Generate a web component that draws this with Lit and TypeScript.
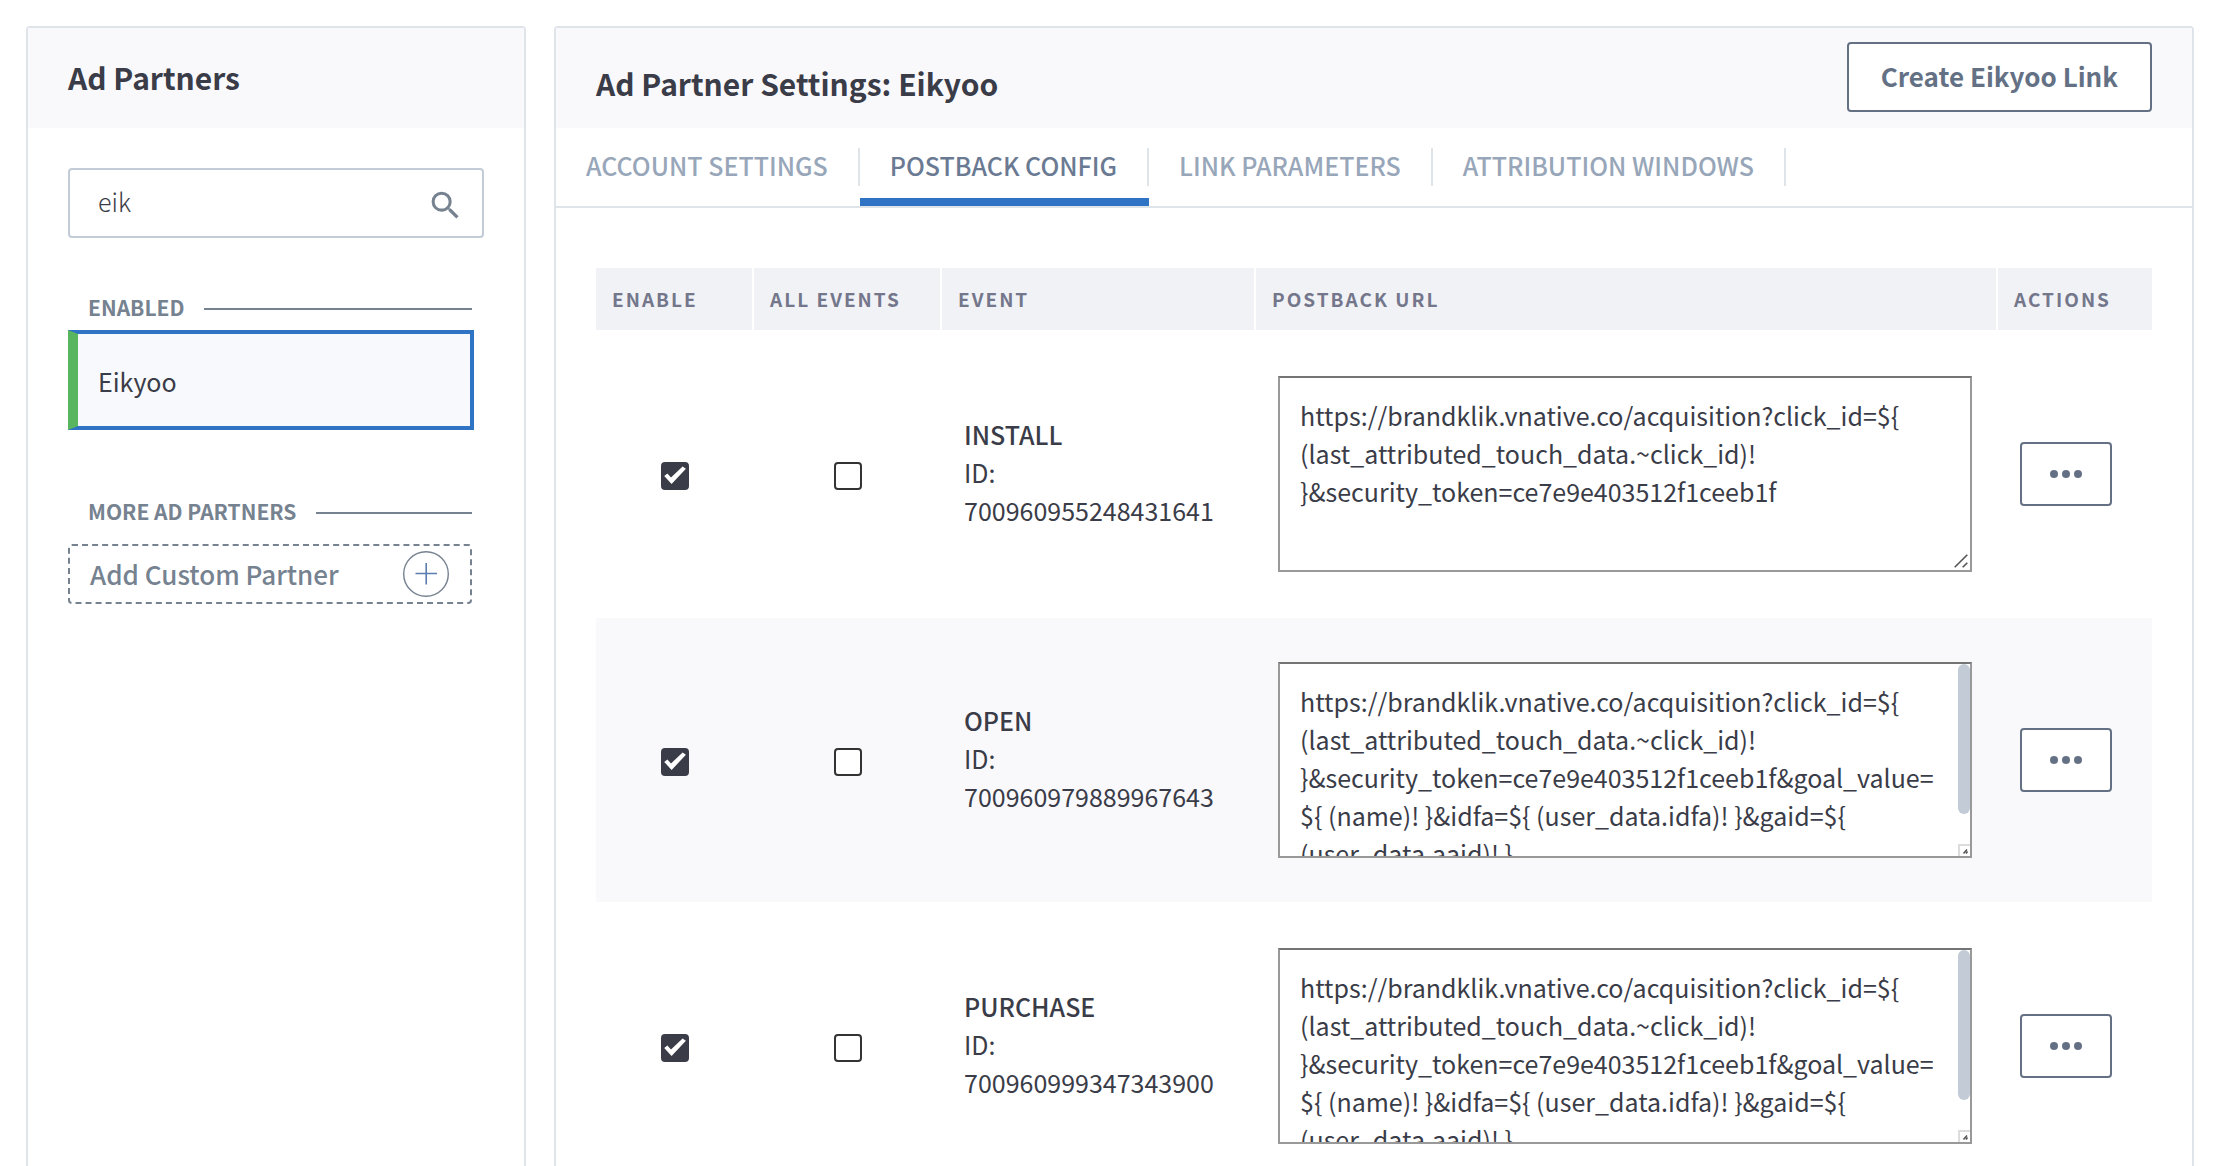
import { LitElement, html, css, svg, nothing } from "lit";
import { customElement, property, state } from "lit/decorators.js";

interface PostbackRow {
  name: string;
  id: string;
  url: string;
  enabled: boolean;
  allEvents: boolean;
  overflowing: boolean;
}

const BASE_URL =
  "https://brandklik.vnative.co/acquisition?click_id=${ (last_attributed_touch_data.~click_id)! }&security_token=ce7e9e403512f1ceeb1f";
const VALUE_URL =
  BASE_URL + "&goal_value=${ (name)! }&idfa=${ (user_data.idfa)! }&gaid=${ (user_data.aaid)! }";

const ROWS: PostbackRow[] = [
  { name: "INSTALL", id: "700960955248431641", url: BASE_URL, enabled: true, allEvents: false, overflowing: false },
  { name: "OPEN", id: "700960979889967643", url: VALUE_URL, enabled: true, allEvents: false, overflowing: true },
  { name: "PURCHASE", id: "700960999347343900", url: VALUE_URL, enabled: true, allEvents: false, overflowing: true },
];

const TABS = ["ACCOUNT SETTINGS", "POSTBACK CONFIG", "LINK PARAMETERS", "ATTRIBUTION WINDOWS"];

@customElement("check-box")
export class CheckBox extends LitElement {
  @property({ type: Boolean }) checked = false;
  @property() label = "";

  static styles = css`
    :host {
      display: grid;
      width: 28px;
      margin: 0 auto;
    }
    .box,
    .mark {
      grid-area: 1 / 1;
      width: 28px;
      height: 28px;
    }
    .box {
      appearance: none;
      box-sizing: border-box;
      margin: 0;
      border: 2px solid #333;
      border-radius: 4px;
      background: #fff;
    }
    .box:checked {
      border-color: #3a3c48;
      background: #3a3c48;
    }
    .mark {
      pointer-events: none;
      fill: #fff;
    }
  `;

  render() {
    return html`
      <input
        class="box"
        type="checkbox"
        aria-label=${this.label}
        .checked=${this.checked}
        @change=${(e: Event) => (this.checked = (e.target as HTMLInputElement).checked)}
      />
      ${this.checked
        ? html`<svg class="mark" viewBox="0 0 28 28" aria-hidden="true">
            <path d="M3.2 13.9 6.4 11.5 10 15.6 21.6 4.6 24.9 6.8 10.6 22Z" />
          </svg>`
        : nothing}
    `;
  }
}

@customElement("url-field")
export class UrlField extends LitElement {
  @property() value = "";
  @property() label = "";
  @property({ type: Boolean }) overflowing = false;

  static styles = css`
    :host {
      display: block;
      position: relative;
    }
    .text {
      display: block;
      box-sizing: border-box;
      width: 100%;
      height: 196px;
      margin: 0;
      padding: 18px 20px;
      border: 2px solid #999;
      border-top-color: #747474;
      border-radius: 0;
      background: #fff;
      color: #3a3c48;
      font-family: "Noto Sans CJK SC", "Noto Sans", sans-serif;
      font-size: 25px;
      line-height: 38px;
      resize: none;
      outline: none;
      scrollbar-width: none;
    }
    .scrolling {
      padding-right: 32px;
    }
    .thumb {
      position: absolute;
      top: 2px;
      right: 2px;
      width: 12px;
      height: 150px;
      border-radius: 6px;
      background: #c3ccd6;
      pointer-events: none;
    }
    .grip {
      position: absolute;
      right: 4px;
      bottom: 4px;
      width: 14px;
      height: 14px;
      pointer-events: none;
      fill: none;
      stroke: #555;
    }
    .corner {
      right: 2px;
      bottom: 2px;
      width: 12px;
      height: 12px;
      background: #fff;
    }
  `;

  render() {
    return html`
      <textarea
        class="text ${this.overflowing ? "scrolling" : ""}"
        aria-label=${this.label}
        .value=${this.value}
      ></textarea>
      ${this.overflowing
        ? html`<span class="thumb"></span>
            <svg class="grip corner" viewBox="0 0 12 12" aria-hidden="true">
              <path d="M1 12V1H12" stroke="#dcdcdc" stroke-width="2" />
              <path d="M5.5 9.5 9 5.5M8 9.5 9.5 7.5" stroke-width="1.5" />
            </svg>`
        : html`<svg class="grip" viewBox="0 0 14 14" aria-hidden="true">
            <path d="M0.7 13.3 13.3 0.7M8.7 13.3 13.3 8.7" stroke-width="1.6" />
          </svg>`}
    `;
  }
}

@customElement("partner-list")
export class PartnerList extends LitElement {
  @state() private query = "eik";

  static styles = css`
    :host {
      display: block;
      box-sizing: border-box;
      flex: 0 0 500px;
      border: 2px solid #dfe4e9;
      border-radius: 4px;
      background: #fff;
    }
    .head {
      display: flex;
      align-items: center;
      box-sizing: border-box;
      height: 100px;
      padding: 0 40px 2px;
      background: #f9f9fc;
    }
    .title {
      margin: 0;
      color: #3a3c48;
      font-size: 30px;
      line-height: 40px;
      font-weight: 700;
    }
    .body {
      padding: 40px;
    }
    .search {
      display: flex;
      align-items: center;
      box-sizing: border-box;
      height: 70px;
      padding-right: 18px;
      border: 2px solid #c3ccd6;
      border-radius: 4px;
    }
    .query {
      flex: 1;
      min-width: 0;
      padding: 0 0 4px 28px;
      border: 0;
      outline: none;
      background: none;
      color: #3a3c48;
      font: inherit;
      font-weight: 200;
      font-size: 25px;
      line-height: 38px;
    }
    .glass {
      width: 37px;
      height: 37px;
      margin-top: 4px;
      fill: #768290;
    }
    .group {
      margin: 54px 12px 0 0;
    }
    .group + .group {
      margin-top: 66px;
    }
    .caption {
      display: flex;
      align-items: center;
      gap: 20px;
      margin: 0 0 8px;
      padding-left: 20px;
      color: #768290;
      font-size: 21px;
      line-height: 30px;
      font-weight: 700;
    }
    .caption::after {
      content: "";
      flex: 1;
      height: 2px;
      margin-top: 4px;
      background: #768290;
    }
    .spaced {
      margin-bottom: 18px;
    }
    .partner {
      display: block;
      box-sizing: border-box;
      height: 100px;
      margin-right: -2px;
      padding: 28px 20px;
      border: 4px solid #2f74c4;
      border-left: 10px solid #58b560;
      background: #f8f9fd;
      color: #3a3c48;
      font-size: 25px;
      line-height: 38px;
      text-decoration: none;
    }
    .add {
      display: flex;
      align-items: center;
      justify-content: space-between;
      box-sizing: border-box;
      width: 100%;
      height: 60px;
      padding: 0 20px;
      border: 2px dashed #768290;
      border-radius: 4px;
      background: #fff;
      color: #768290;
      font: inherit;
      font-size: 26px;
      line-height: 38px;
      font-weight: 500;
    }
    .plus {
      width: 48px;
      height: 48px;
      fill: none;
      stroke: #768290;
      stroke-width: 1.4;
    }
  `;

  render() {
    return html`
      <header class="head"><h2 class="title">Ad Partners</h2></header>
      <div class="body">
        <label class="search">
          <input
            class="query"
            type="text"
            aria-label="Search partners"
            .value=${this.query}
            @input=${(e: Event) => (this.query = (e.target as HTMLInputElement).value)}
          />
          <svg class="glass" viewBox="0 0 24 24" aria-hidden="true">
            <path
              d="M15.5 14h-.79l-.28-.27A6.47 6.47 0 0 0 16 9.5 6.5 6.5 0 1 0 9.5 16c1.61 0 3.09-.59 4.23-1.57l.27.28v.79l5 4.99L20.49 19l-4.99-5zm-6 0C7.01 14 5 11.99 5 9.5S7.01 5 9.5 5 14 7.01 14 9.5 11.99 14 9.5 14z"
            />
          </svg>
        </label>
        <section class="group">
          <h3 class="caption">ENABLED</h3>
          <a class="partner" href="#eikyoo">Eikyoo</a>
        </section>
        <section class="group">
          <h3 class="caption spaced">MORE AD PARTNERS</h3>
          <button class="add" type="button">
            Add Custom Partner
            <svg class="plus" viewBox="0 0 48 48" aria-hidden="true">
              <circle cx="24" cy="24" r="22.3" />
              <path d="M13.5 23.5H35M24.2 13V34.5" stroke="#5b7db0" stroke-width="1.6" />
            </svg>
          </button>
        </section>
      </div>
    `;
  }
}

@customElement("partner-settings")
export class PartnerSettings extends LitElement {
  @state() private active = 1;

  static styles = css`
    :host {
      display: block;
      box-sizing: border-box;
      flex: 1;
      min-width: 0;
      border: 2px solid #dfe4e9;
      border-radius: 4px;
      background: #fff;
    }
    .head {
      display: flex;
      align-items: center;
      justify-content: space-between;
      box-sizing: border-box;
      height: 100px;
      padding: 0 40px 2px;
      background: #f9f9fc;
    }
    .title {
      margin: 0;
      padding-top: 12px;
      color: #3a3c48;
      font-size: 30px;
      line-height: 40px;
      font-weight: 700;
    }
    .create,
    .more {
      box-sizing: border-box;
      border: 2px solid #647185;
      border-radius: 4px;
      background: #fff;
      color: #647185;
      font: inherit;
    }
    .create {
      height: 70px;
      padding: 0 32px 2px;
      font-size: 26px;
      line-height: 38px;
      font-weight: 700;
    }
    .tabs {
      display: flex;
      border-bottom: 2px solid #dfe4e9;
    }
    .tab {
      padding: 20px 0 12px;
      border: 0;
      border-bottom: 8px solid transparent;
      background: none;
      color: #98a6b9;
      font: inherit;
      font-size: 25px;
      font-weight: 500;
    }
    .name {
      display: block;
      padding: 0 30px 4px;
      border-right: 2px solid #dfe4e9;
      line-height: 34px;
    }
    .current {
      border-bottom-color: #2f74c4;
      color: #6a7a92;
    }
    .body {
      padding: 60px 40px;
    }
    .grid {
      width: 100%;
      table-layout: fixed;
      border-collapse: separate;
      border-spacing: 0;
      color: #3a3c48;
      font-size: 25px;
      line-height: 38px;
    }
    .c-enable {
      width: 158px;
    }
    .c-all {
      width: 188px;
    }
    .c-event {
      width: 314px;
    }
    .c-actions {
      width: 154px;
    }
    th {
      box-sizing: border-box;
      height: 64px;
      padding: 0 0 0 16px;
      border-right: 2px solid #fff;
      border-bottom: 2px solid #fff;
      background: #f1f2f6;
      color: #74778b;
      font-size: 19px;
      line-height: 30px;
      font-weight: 700;
      letter-spacing: 2px;
      text-align: left;
    }
    th:last-child {
      border-right: 0;
    }
    td {
      padding: 44px 22px;
      border-bottom: 2px solid #fff;
      vertical-align: middle;
    }
    .row:nth-child(even) td {
      background: #f9f9fc;
    }
    td.pick {
      padding-top: 48px;
    }
    td.info {
      padding-bottom: 48px;
    }
    td.url {
      padding-right: 26px;
    }
    .event {
      display: block;
      font-weight: 500;
    }
    .more {
      display: flex;
      align-items: center;
      justify-content: center;
      width: 92px;
      height: 64px;
      padding: 0;
    }
    .dots {
      width: 32px;
      height: 8px;
      fill: currentColor;
    }
  `;

  private row(r: PostbackRow) {
    return html`
      <tr class="row">
        <td class="pick"><check-box ?checked=${r.enabled} label="Enable ${r.name}"></check-box></td>
        <td class="pick"><check-box ?checked=${r.allEvents} label="All events for ${r.name}"></check-box></td>
        <td class="info"><strong class="event">${r.name}</strong>ID: ${r.id}</td>
        <td class="url">
          <url-field .value=${r.url} label="Postback URL for ${r.name}" ?overflowing=${r.overflowing}></url-field>
        </td>
        <td>
          <button class="more" type="button" aria-label="Actions for ${r.name}">
            <svg class="dots" viewBox="0 0 32 8" aria-hidden="true">
              ${[4, 16, 28].map((x) => svg`<circle cx=${x} cy="4" r="4" />`)}
            </svg>
          </button>
        </td>
      </tr>
    `;
  }

  render() {
    return html`
      <header class="head">
        <h1 class="title">Ad Partner Settings: Eikyoo</h1>
        <button class="create" type="button">Create Eikyoo Link</button>
      </header>
      <nav class="tabs">
        ${TABS.map(
          (t, i) => html`<button
            type="button"
            class="tab ${i === this.active ? "current" : ""}"
            @click=${() => (this.active = i)}
          ><span class="name">${t}</span></button>`
        )}
      </nav>
      <div class="body">
        <table class="grid">
          <colgroup>
            <col class="c-enable" />
            <col class="c-all" />
            <col class="c-event" />
            <col />
            <col class="c-actions" />
          </colgroup>
          <thead>
            <tr>
              <th scope="col">ENABLE</th>
              <th scope="col">ALL EVENTS</th>
              <th scope="col">EVENT</th>
              <th scope="col">POSTBACK URL</th>
              <th scope="col">ACTIONS</th>
            </tr>
          </thead>
          <tbody>
            ${ROWS.map((r) => this.row(r))}
          </tbody>
        </table>
      </div>
    `;
  }
}

@customElement("app-root")
export class AppRoot extends LitElement {
  static styles = css`
    :host {
      display: block;
      box-sizing: border-box;
      height: 100vh;
      overflow: hidden;
      padding: 26px 26px 0;
      background: #fff;
      font-family: "Noto Sans CJK SC", "Noto Sans", sans-serif;
    }
    .page {
      display: flex;
      gap: 28px;
    }
  `;

  render() {
    return html`
      <main class="page">
        <partner-list></partner-list>
        <partner-settings></partner-settings>
      </main>
    `;
  }
}
